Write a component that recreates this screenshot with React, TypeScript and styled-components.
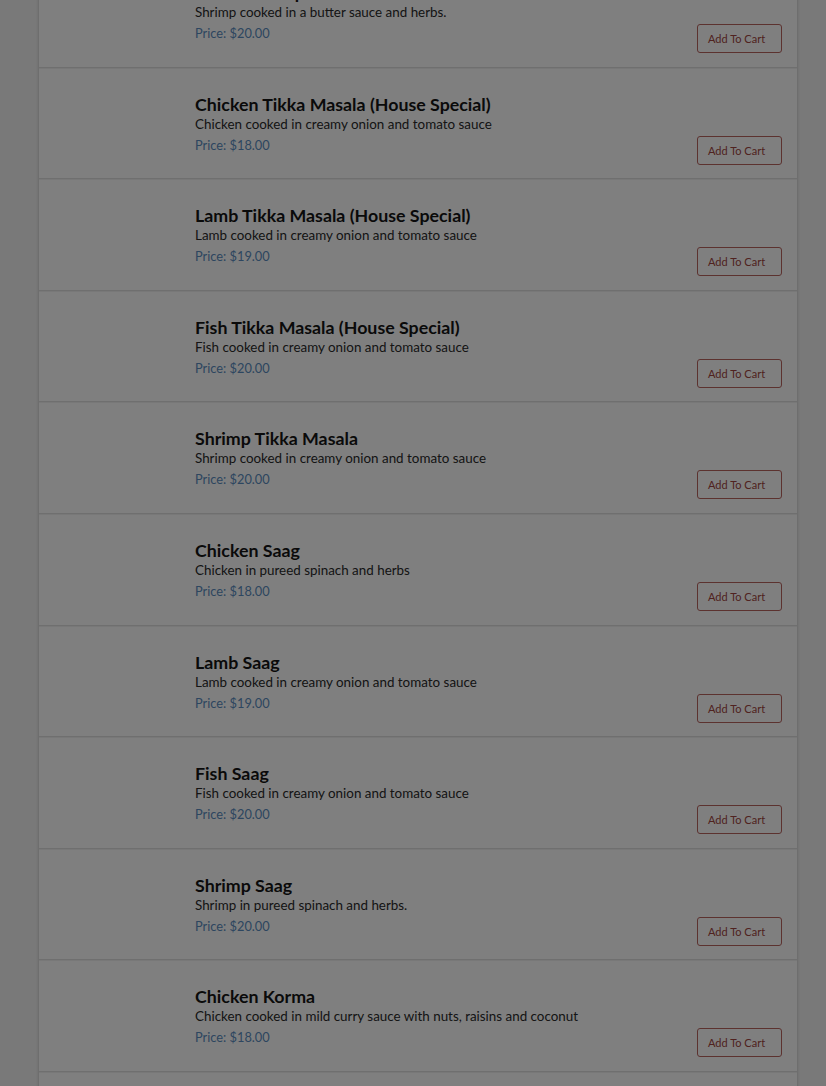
import React from "react";
import styled, { createGlobalStyle } from "styled-components";

const GlobalStyle = createGlobalStyle`
  html, body {
    margin: 0;
    padding: 0;
    background: #f3f3f3;
    font-family: Lato, "Open Sans", sans-serif;
    overflow: hidden;
  }
`;

const Page = styled.div`
  height: 1086px;
  overflow: hidden;
`;

const Card = styled.div`
  margin: -44px 0 0 38px;
  width: 758px;
  background: #ffffff;
  border-left: 1px solid #dcdcdc;
  border-right: 1px solid #dcdcdc;
  box-shadow: 0 0 3px rgba(0, 0, 0, 0.12);
`;

const Row = styled.div`
  display: flex;
  align-items: flex-end;
  height: 111.6px;
  box-sizing: border-box;
  padding: 27.6px 15px 13.6px 0;
  border-bottom: 1px solid #dedede;
  box-shadow: 0 1px 0 #f0f0f0;
`;

const Thumb = styled.div`
  width: 156px;
  flex: 0 0 156px;
  align-self: stretch;
`;

const Info = styled.div`
  flex: 1;
  display: flex;
  flex-direction: column;
  margin-bottom: 9px;
`;

const Title = styled.div`
  font-size: 17.8px;
  line-height: 20px;
  font-weight: 700;
  color: #151515;
`;

const Desc = styled.div`
  font-size: 13.4px;
  line-height: 21px;
  color: #2a2a2a;
`;

const Price = styled.div`
  font-size: 12.8px;
  line-height: 21px;
  color: #5a8cc0;
`;

const CartButton = styled.button`
  width: 85px;
  height: 29px;
  box-sizing: border-box;
  padding: 0 0 0 10px;
  text-align: left;
  font-family: inherit;
  font-size: 11px;
  color: #a04440;
  background: #ffffff;
  border: 1px solid #b8645f;
  border-radius: 3px;
  cursor: pointer;
`;

const Overlay = styled.div`
  position: fixed;
  inset: 0;
  background: rgba(0, 0, 0, 0.5);
`;

type Item = { name: string; desc: string; price: string };

const items: Item[] = [
  { name: "Butter Shrimp", desc: "Shrimp cooked in a butter sauce and herbs.", price: "$20.00" },
  { name: "Chicken Tikka Masala (House Special)", desc: "Chicken cooked in creamy onion and tomato sauce", price: "$18.00" },
  { name: "Lamb Tikka Masala (House Special)", desc: "Lamb cooked in creamy onion and tomato sauce", price: "$19.00" },
  { name: "Fish Tikka Masala (House Special)", desc: "Fish cooked in creamy onion and tomato sauce", price: "$20.00" },
  { name: "Shrimp Tikka Masala", desc: "Shrimp cooked in creamy onion and tomato sauce", price: "$20.00" },
  { name: "Chicken Saag", desc: "Chicken in pureed spinach and herbs", price: "$18.00" },
  { name: "Lamb Saag", desc: "Lamb cooked in creamy onion and tomato sauce", price: "$19.00" },
  { name: "Fish Saag", desc: "Fish cooked in creamy onion and tomato sauce", price: "$20.00" },
  { name: "Shrimp Saag", desc: "Shrimp in pureed spinach and herbs.", price: "$20.00" },
  { name: "Chicken Korma", desc: "Chicken cooked in mild curry sauce with nuts, raisins and coconut", price: "$18.00" },
  { name: "Lamb Korma", desc: "Lamb cooked in mild curry sauce with nuts, raisins and coconut", price: "$19.00" },
];

export default function App() {
  return (
    <Page>
      <GlobalStyle />
      <Card>
        {items.map((it) => (
          <Row key={it.name}>
            <Thumb />
            <Info>
              <Title>{it.name}</Title>
              <Desc>{it.desc}</Desc>
              <Price>Price: {it.price}</Price>
            </Info>
            <CartButton>Add To Cart</CartButton>
          </Row>
        ))}
      </Card>
      <Overlay />
    </Page>
  );
}
